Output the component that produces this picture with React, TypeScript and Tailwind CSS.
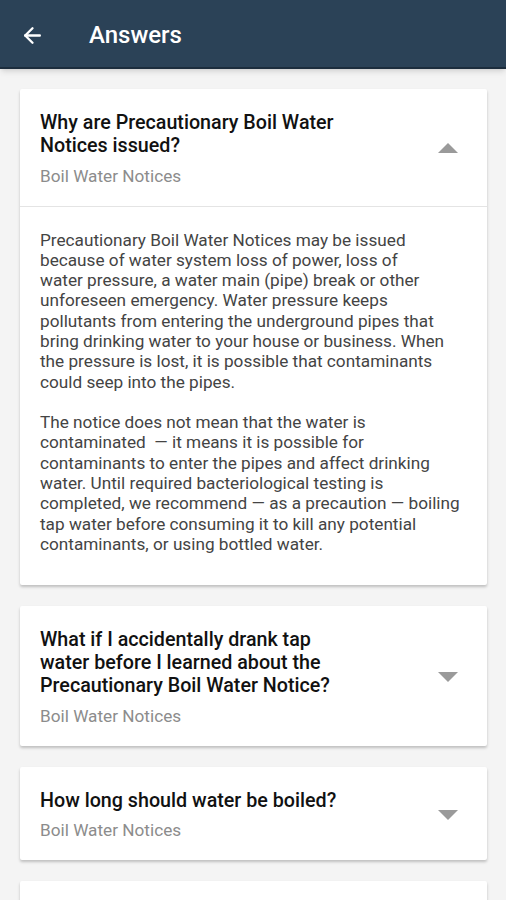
import { ArrowLeft } from "lucide-react";

// the answer text keeps the line breaks of the original layout
const answer = [
    [
        "Precautionary Boil Water Notices may be issued",
        "because of water system loss of power, loss of",
        "water pressure, a water main (pipe) break or other",
        "unforeseen emergency. Water pressure keeps",
        "pollutants from entering the underground pipes that",
        "bring drinking water to your house or business. When",
        "the pressure is lost, it is possible that contaminants",
        "could seep into the pipes.",
    ],
    [
        "The notice does not mean that the water is",
        "contaminated \u00a0\u2014 it means it is possible for",
        "contaminants to enter the pipes and affect drinking",
        "water. Until required bacteriological testing is",
        "completed, we recommend \u2014 as a precaution \u2014 boiling",
        "tap water before consuming it to kill any potential",
        "contaminants, or using bottled water.",
    ],
];

const faqs = [
    { q: "Why are Precautionary Boil Water Notices issued?", open: true },
    { q: "What if I accidentally drank tap water before I learned about the Precautionary Boil Water Notice?" },
    { q: "How long should water be boiled?" },
    { q: "Can I use tap water to brush my teeth?" },
];

export default function App() {
    return (
        <div className="h-[900px] overflow-hidden bg-[#f4f4f4] font-['Roboto',sans-serif]">
            <header className="h-[69px] pt-[3px] bg-[#2b4257] border-b-2 border-[#1c2d3d] flex items-center shadow-md">
                <ArrowLeft size={25} strokeWidth={2.25} className="text-white ml-[20px]" />
                <h1 className="ml-[44px] text-[24px] font-medium text-white">Answers</h1>
            </header>

            <div className="px-[20px] pr-[19px] pt-[20px] flex flex-col gap-[21px]">
                {faqs.map((f, i) => (
                    <FaqCard key={i} {...f} />
                ))}
            </div>
        </div>
    );
}

function FaqCard({ q, open }: { q: string; open?: boolean }) {
    return (
        <div className="bg-white rounded-[2px] shadow-[0_2px_3px_rgba(0,0,0,0.22)]">
            <div className="flex items-center pl-[20px] pr-[29px] pt-[22px] pb-[20px]">
                <div className="flex-1">
                    <p className="max-w-[310px] text-[19.7px] leading-[23px] font-medium text-[#111]">{q}</p>
                    <p className="mt-[8.5px] text-[17.2px] leading-[20px] text-[#8c8c8c]">Boil Water Notices</p>
                </div>
                <svg width="20" height="10" viewBox="0 0 20 10" className="shrink-0">
                    {open ? (
                        <path d="M0 10 L10 0 L20 10 Z" fill="#9a9a9a" />
                    ) : (
                        <path d="M0 0 L10 10 L20 0 Z" fill="#9a9a9a" />
                    )}
                </svg>
            </div>
            {open && (
                <div className="border-t border-[#e4e4e4] px-[20px] pt-[23px] pb-[31px] text-[17.2px] leading-[20.3px] text-[#444] whitespace-nowrap">
                    {answer.map((para, i) => (
                        <p key={i} className={i > 0 ? "mt-[20.3px]" : ""}>
                            {para.map((line, j) => (
                                <span key={j} className="block">{line}</span>
                            ))}
                        </p>
                    ))}
                </div>
            )}
        </div>
    );
}
